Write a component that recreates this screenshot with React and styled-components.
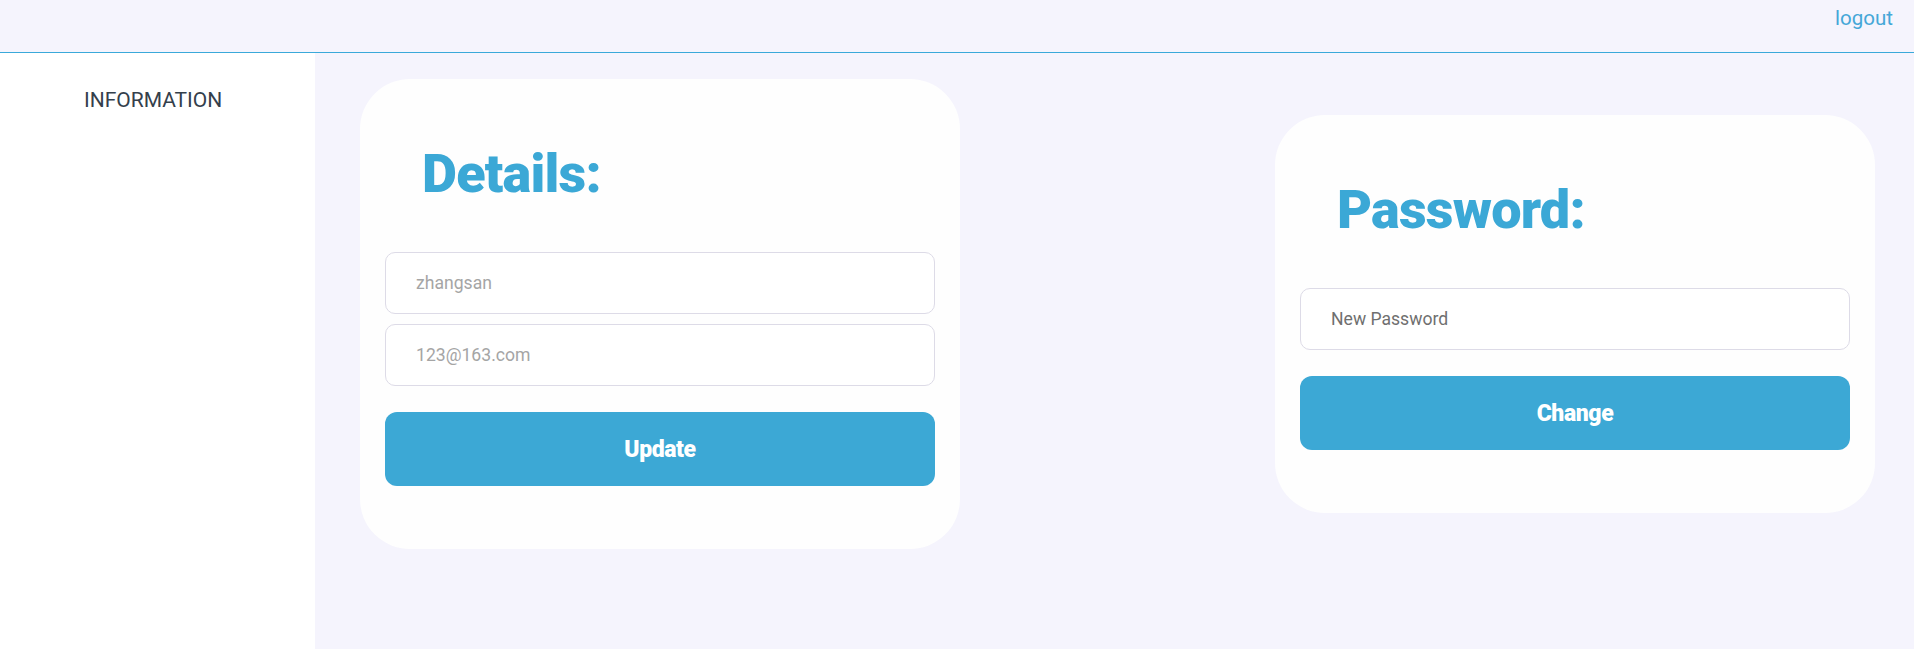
import styled, { createGlobalStyle } from "styled-components";

const GlobalStyle = createGlobalStyle`
  html, body {
    margin: 0;
    padding: 0;
  }
  body {
    font-family: Roboto, "Liberation Sans", sans-serif;
    background-color: #f5f4fd;
  }
  * {
    box-sizing: border-box;
  }
`;

const Page = styled.div`
  display: flex;
  flex-direction: column;
  min-height: 100vh;
`;

const TopBar = styled.header`
  height: 53px;
  display: flex;
  justify-content: flex-end;
  align-items: flex-start;
  padding: 6px 21px 0 0;
  border-bottom: 1px solid #3aa9da;
  background-color: #f5f4fd;
`;

const Logout = styled.a`
  font-size: 20.5px;
  color: #45a7d8;
  text-decoration: none;
  cursor: pointer;
`;

const Body = styled.div`
  flex: 1;
  display: flex;
`;

const Sidebar = styled.nav`
  width: 315px;
  flex-shrink: 0;
  background-color: #ffffff;
  padding: 35px 0 0 84px;
`;

const NavItem = styled.div`
  font-size: 21px;
  color: #34404c;
  cursor: pointer;
`;

const Main = styled.main`
  flex: 1;
  display: flex;
  justify-content: space-between;
  align-items: center;
  padding: 26px 39px 26px 45px;
  align-self: flex-start;
`;

const Card = styled.section`
  width: 600px;
  background-color: #fefefe;
  border-radius: 50px;
  padding: 0 25px 63px;
  display: flex;
  flex-direction: column;
`;

const Title = styled.h1`
  margin: 63px 0 47px 37px;
  font-size: 54px;
  line-height: 63px;
  font-weight: 900;
  letter-spacing: -0.8px;
  color: #3ba8d6;
`;

const Fields = styled.div`
  display: flex;
  flex-direction: column;
  gap: 10px;
`;

const Field = styled.input`
  height: 62px;
  width: 100%;
  border: 1px solid #dddbe7;
  border-radius: 10px;
  padding: 0 30px;
  font-family: Roboto, "Liberation Sans", sans-serif;
  font-size: 17.6px;
  background-color: #ffffff;
  outline: none;

  &::placeholder {
    color: ${(p) => (p.$dark ? "#6f6f6f" : "#a5a5a5")};
  }
`;

const ActionButton = styled.button`
  margin-top: 26px;
  height: 74px;
  width: 100%;
  border: none;
  border-radius: 12px;
  background-color: #3ca8d5;
  color: #ffffff;
  font-family: Roboto, "Liberation Sans", sans-serif;
  font-size: 23px;
  font-weight: 900;
  letter-spacing: -0.4px;
  cursor: pointer;
`;

export default function App() {
  return (
    <>
      <GlobalStyle />
      <Page>
        <TopBar>
          <Logout>logout</Logout>
        </TopBar>
        <Body>
          <Sidebar>
            <NavItem>INFORMATION</NavItem>
          </Sidebar>
          <Main>
            <Card>
              <Title>Details:</Title>
              <Fields>
                <Field placeholder="zhangsan" />
                <Field placeholder="123@163.com" />
              </Fields>
              <ActionButton>Update</ActionButton>
            </Card>
            <Card>
              <Title>Password:</Title>
              <Fields>
                <Field type="password" placeholder="New Password" $dark />
              </Fields>
              <ActionButton>Change</ActionButton>
            </Card>
          </Main>
        </Body>
      </Page>
    </>
  );
}
